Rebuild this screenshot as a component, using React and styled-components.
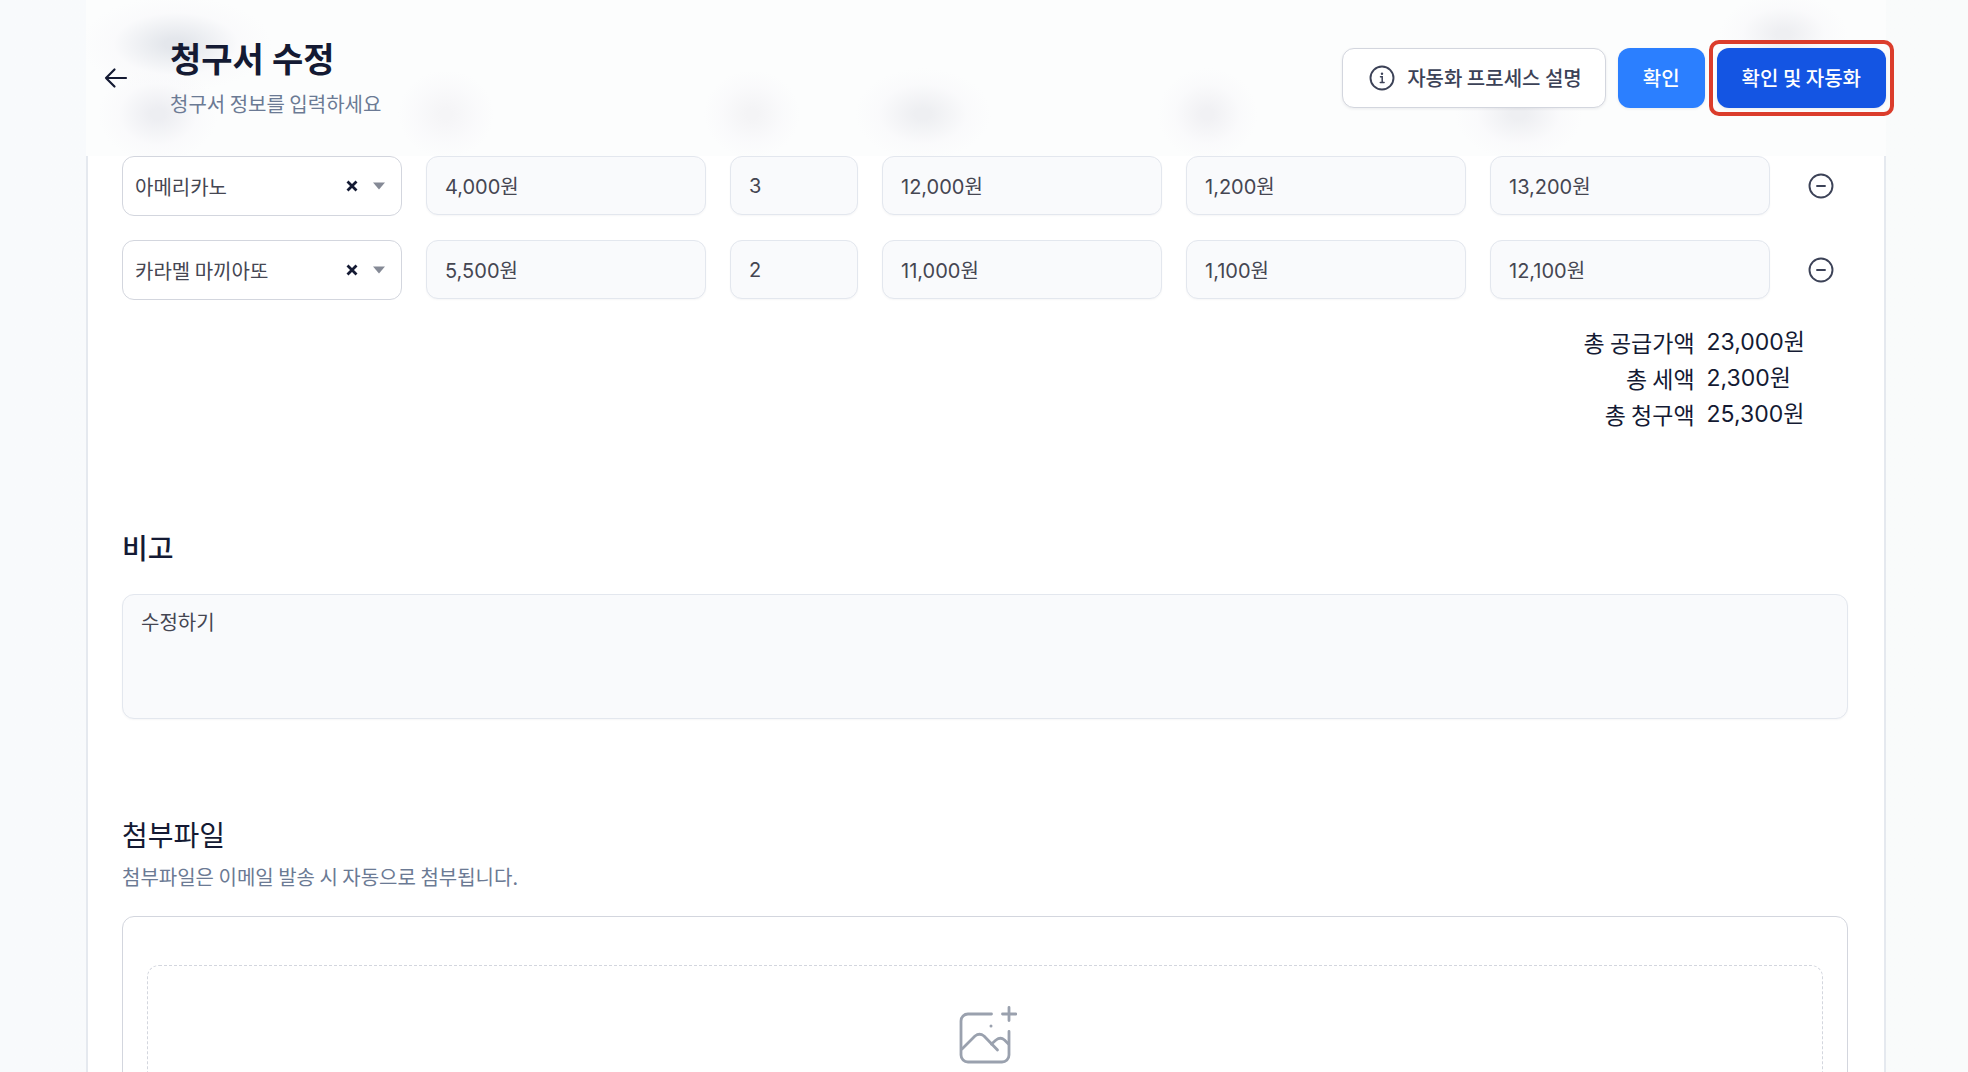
import React, { useState } from "react";
import styled, { createGlobalStyle } from "styled-components";

const hangulFirst = `"Noto Sans CJK KR", sans-serif`;

const GlobalStyle = createGlobalStyle`
  *, *::before, *::after { box-sizing: border-box; }
  body {
    margin: 0;
    background: #f9fafc;
    color: #141a33;
    font-family: Inter, "Noto Sans CJK KR", sans-serif;
    font-size: 20px;
  }
  h1, h2, p, dl, dd, dt { margin: 0; }
  button, input, select, textarea { font: inherit; color: inherit; margin: 0; }
`;

const Page = styled.div`
  height: 100vh;
  display: flex;
  flex-direction: column;
  padding: 0 82px 0 86px;
  overflow: hidden;
  background: linear-gradient(90deg, #f8fafc, #f9fbfb);
`;

const smudge = (size, at, color) =>
  `radial-gradient(${size} at ${at}, ${color} 0%, ${color} 12%, rgba(249, 249, 251, 0.7) 65%, transparent 100%)`;

const Header = styled.header`
  flex: none;
  display: flex;
  align-items: center;
  justify-content: space-between;
  gap: 24px;
  padding: 38px 0;
  background:
    ${smudge("96px 48px", "5% 44px", "#e4e7ec")},
    ${smudge("60px 48px", "4% 114px", "#edeef2")},
    ${smudge("48px 44px", "20% 114px", "#f5f5f7")},
    ${smudge("48px 44px", "37% 114px", "#f4f4f6")},
    ${smudge("68px 46px", "46.5% 114px", "#eeeff2")},
    ${smudge("50px 46px", "62.3% 114px", "#f1f1f4")},
    ${smudge("64px 46px", "79.6% 114px", "#eeeff2")},
    ${smudge("64px 40px", "94.3% 34px", "#eeeff2")},
    #fcfdfd;
`;

const HeaderStart = styled.div`
  display: flex;
  align-items: center;
  gap: 24px;
`;

const IconButton = styled.button`
  display: inline-flex;
  align-items: center;
  justify-content: center;
  width: ${(p) => p.$width}px;
  height: 60px;
  padding: 0;
  border: 0;
  background: none;
  color: ${(p) => p.$color};
  cursor: pointer;
`;

const Titles = styled.div`
  display: flex;
  flex-direction: column;
  gap: 8px;
`;

const PageTitle = styled.h1`
  font-size: 34px;
  line-height: 44px;
  font-weight: 700;
`;

const Muted = styled.p`
  font-family: ${hangulFirst};
  font-size: 20px;
  line-height: 28px;
  color: #6b7a94;
`;

const Actions = styled.div`
  display: flex;
  gap: 12px;
`;

const variants = {
  outline: "background: #fff; border-color: #d3d6de; color: #3c4257; padding: 0 23px 0 26px;",
  primary: "background: #2b7fff; color: #fff;",
  strong: "background: #1455e3; color: #fff;",
};

const ActionButton = styled.button`
  position: relative;
  display: inline-flex;
  align-items: center;
  gap: 12px;
  height: 60px;
  padding: 0 24px;
  border: 1px solid transparent;
  border-radius: 12px;
  font-family: ${hangulFirst};
  font-size: 20px;
  line-height: 28px;
  font-weight: 500;
  white-space: nowrap;
  cursor: pointer;
  box-shadow: 0 1px 3px rgba(20, 26, 51, 0.08);
  ${(p) => variants[p.$variant]}
`;

const Spotlight = styled.span`
  position: absolute;
  inset: -9px;
  border: 4px solid #db3d2c;
  border-radius: 10px;
  pointer-events: none;
`;

const Card = styled.main`
  flex: 1;
  min-height: 0;
  overflow-y: auto;
  scrollbar-width: none;
  padding: 0 36px 0 34px;
  background: #fff;
  border: solid #e5e9ef;
  border-width: 0 2px;
`;

const Items = styled.div`
  display: flex;
  flex-direction: column;
  gap: 24px;
`;

const ItemRow = styled.div`
  display: grid;
  grid-template-columns: 1fr 1fr 128px 1fr 1fr 1fr 54px;
  align-items: start;
  gap: 24px;
`;

const SelectBox = styled.div`
  display: flex;
  align-items: center;
  height: 60px;
  padding-right: 16px;
  border: 1px solid #d3d6de;
  border-radius: 12px;
  background: #fff;
`;

const ItemSelect = styled.select`
  flex: 1;
  min-width: 0;
  height: 100%;
  padding: 0 0 0 12px;
  border: 0;
  outline: 0;
  background: none;
  appearance: none;
  color: #454652;
  font-family: ${hangulFirst};
`;

const ClearButton = styled.button`
  display: flex;
  align-items: center;
  padding: 8px;
  border: 0;
  background: none;
  color: #141a33;
  cursor: pointer;
`;

const Field = styled.input`
  width: 100%;
  min-width: 0;
  height: 59px;
  padding: 0 18px;
  border: 1px solid #e3e7ee;
  border-radius: 12px;
  background: #f9fafc;
  color: #454652;
  outline: 0;
  box-shadow: 0 1px 2px rgba(20, 26, 51, 0.04);
`;

const Totals = styled.dl`
  display: grid;
  grid-template-columns: auto auto;
  justify-content: end;
  column-gap: 12px;
  margin: 24px 43px 0 0;
  font-size: 23px;
  line-height: 36px;
`;

const TotalLabel = styled.dt`
  text-align: right;
  font-family: ${hangulFirst};
`;

const Section = styled.section`
  display: flex;
  flex-direction: column;
  margin-top: 96px;
`;

const SectionTitle = styled.h2`
  font-size: 28px;
  line-height: 42px;
  font-weight: ${(p) => p.$weight};
`;

const SectionHeading = styled.div`
  display: flex;
  flex-direction: column;
  gap: 6px;
`;

const Note = styled.textarea`
  display: block;
  width: 100%;
  height: 125px;
  margin-top: 24px;
  padding: 14px 18px;
  border: 1px solid #e3e7ee;
  border-radius: 12px;
  background: #f9fafc;
  color: #454652;
  line-height: 28px;
  resize: none;
  outline: 0;
  box-shadow: 0 1px 2px rgba(20, 26, 51, 0.04);
`;

const UploadPanel = styled.div`
  margin-top: 25px;
  padding: 48px 24px;
  border: 1px solid #d3d6de;
  border-radius: 12px;
`;

const DropZone = styled.button`
  display: flex;
  justify-content: center;
  width: 100%;
  padding: 40px 24px;
  border: 1px dashed #d3d6de;
  border-radius: 12px;
  background: none;
  color: #9aa1ae;
`;

const CaretIcon = styled.svg`
  margin-left: 7px;
`;

const ArrowLeft = () => (
  <svg width="24" height="24" viewBox="0 0 24 24" fill="none" stroke="currentColor" strokeWidth="2.2" strokeLinecap="round" strokeLinejoin="round">
    <path d="M22 12H2M10.5 3.5 2 12l8.500 8.500" />
  </svg>
);

const InfoIcon = () => (
  <svg width="26" height="26" viewBox="0 0 26 26" fill="none" stroke="currentColor" strokeLinecap="round">
    <circle cx="13" cy="13" r="11.500" strokeWidth="1.900" />
    <path d="M11.500 11.800h1.700v5.600M11.300 17.500h3.800" strokeWidth="1.500" />
    <circle cx="13" cy="8.700" r="1.200" fill="currentColor" stroke="none" />
  </svg>
);

const MinusCircle = () => (
  <svg width="26" height="26" viewBox="0 0 26 26" fill="none" stroke="currentColor" strokeWidth="1.900" strokeLinecap="round">
    <circle cx="13" cy="13" r="11.500" />
    <path d="M9 13h8" />
  </svg>
);

const ClearIcon = () => (
  <svg width="12" height="12" viewBox="0 0 12 12" fill="none" stroke="currentColor" strokeWidth="2.800">
    <path d="M1.500 1.500l9 9M10.500 1.500l-9 9" />
  </svg>
);

const Caret = () => (
  <CaretIcon width="12" height="8" viewBox="0 0 12 8" fill="#858a96">
    <path d="M0 0.500h12L6 7.500z" />
  </CaretIcon>
);

const ImagePlus = () => (
  <svg width="64" height="58" viewBox="-6 0 64 58" fill="none" stroke="currentColor" strokeWidth="2.800" strokeLinecap="round" strokeLinejoin="round">
    <path d="M32.500 8H9a7 7 0 0 0-7 7v34a7 7 0 0 0 7 7h34a7 7 0 0 0 7-7V25.500" />
    <path d="M50 1.500v13M43.500 8H57" />
    <path d="M3 43 16 30q4.500-3.500 9 0L38.500 44" />
    <path d="M32.500 38 37 34q4.500-3.500 8.500 0L49.500 38" />
    <circle cx="32" cy="20" r="1.500" fill="currentColor" stroke="none" />
  </svg>
);

const items = [
  { name: "아메리카노", values: ["4,000원", "3", "12,000원", "1,200원", "13,200원"] },
  { name: "카라멜 마끼아또", values: ["5,500원", "2", "11,000원", "1,100원", "12,100원"] },
];

const fieldLabels = ["단가", "수량", "공급가액", "세액", "합계"];

const totals = [
  ["총 공급가액", "23,000원"],
  ["총 세액", "2,300원"],
  ["총 청구액", "25,300원"],
];

function InvoiceItem({ item }) {
  return (
    <ItemRow>
      <SelectBox>
        <ItemSelect aria-label="품목" defaultValue={item.name}>
          <option>{item.name}</option>
        </ItemSelect>
        <ClearButton type="button" aria-label="지우기">
          <ClearIcon />
        </ClearButton>
        <Caret />
      </SelectBox>
      {item.values.map((value, i) => (
        <Field key={fieldLabels[i]} aria-label={fieldLabels[i]} defaultValue={value} />
      ))}
      <IconButton type="button" aria-label="삭제" $width={54} $color="#3c4257">
        <MinusCircle />
      </IconButton>
    </ItemRow>
  );
}

export default function App() {
  const [note, setNote] = useState("수정하기");
  return (
    <Page>
      <GlobalStyle />
      <Header>
        <HeaderStart>
          <IconButton type="button" aria-label="뒤로" $width={60} $color="#141a33">
            <ArrowLeft />
          </IconButton>
          <Titles>
            <PageTitle>청구서 수정</PageTitle>
            <Muted>청구서 정보를 입력하세요</Muted>
          </Titles>
        </HeaderStart>
        <Actions>
          <ActionButton type="button" $variant="outline">
            <InfoIcon />
            자동화 프로세스 설명
          </ActionButton>
          <ActionButton type="button" $variant="primary">확인</ActionButton>
          <ActionButton type="button" $variant="strong">
            확인 및 자동화
            <Spotlight />
          </ActionButton>
        </Actions>
      </Header>
      <Card>
        <Items>
          {items.map((item) => (
            <InvoiceItem key={item.name} item={item} />
          ))}
        </Items>
        <Totals>
          {totals.map(([label, value]) => (
            <React.Fragment key={label}>
              <TotalLabel>{label}</TotalLabel>
              <dd>{value}</dd>
            </React.Fragment>
          ))}
        </Totals>
        <Section>
          <SectionTitle as="label" htmlFor="note" $weight={500}>비고</SectionTitle>
          <Note id="note" value={note} onChange={(e) => setNote(e.target.value)} />
        </Section>
        <Section>
          <SectionHeading>
            <SectionTitle $weight={400}>첨부파일</SectionTitle>
            <Muted>첨부파일은 이메일 발송 시 자동으로 첨부됩니다.</Muted>
          </SectionHeading>
          <UploadPanel>
            <DropZone type="button" aria-label="파일 첨부">
              <ImagePlus />
            </DropZone>
          </UploadPanel>
        </Section>
      </Card>
    </Page>
  );
}
